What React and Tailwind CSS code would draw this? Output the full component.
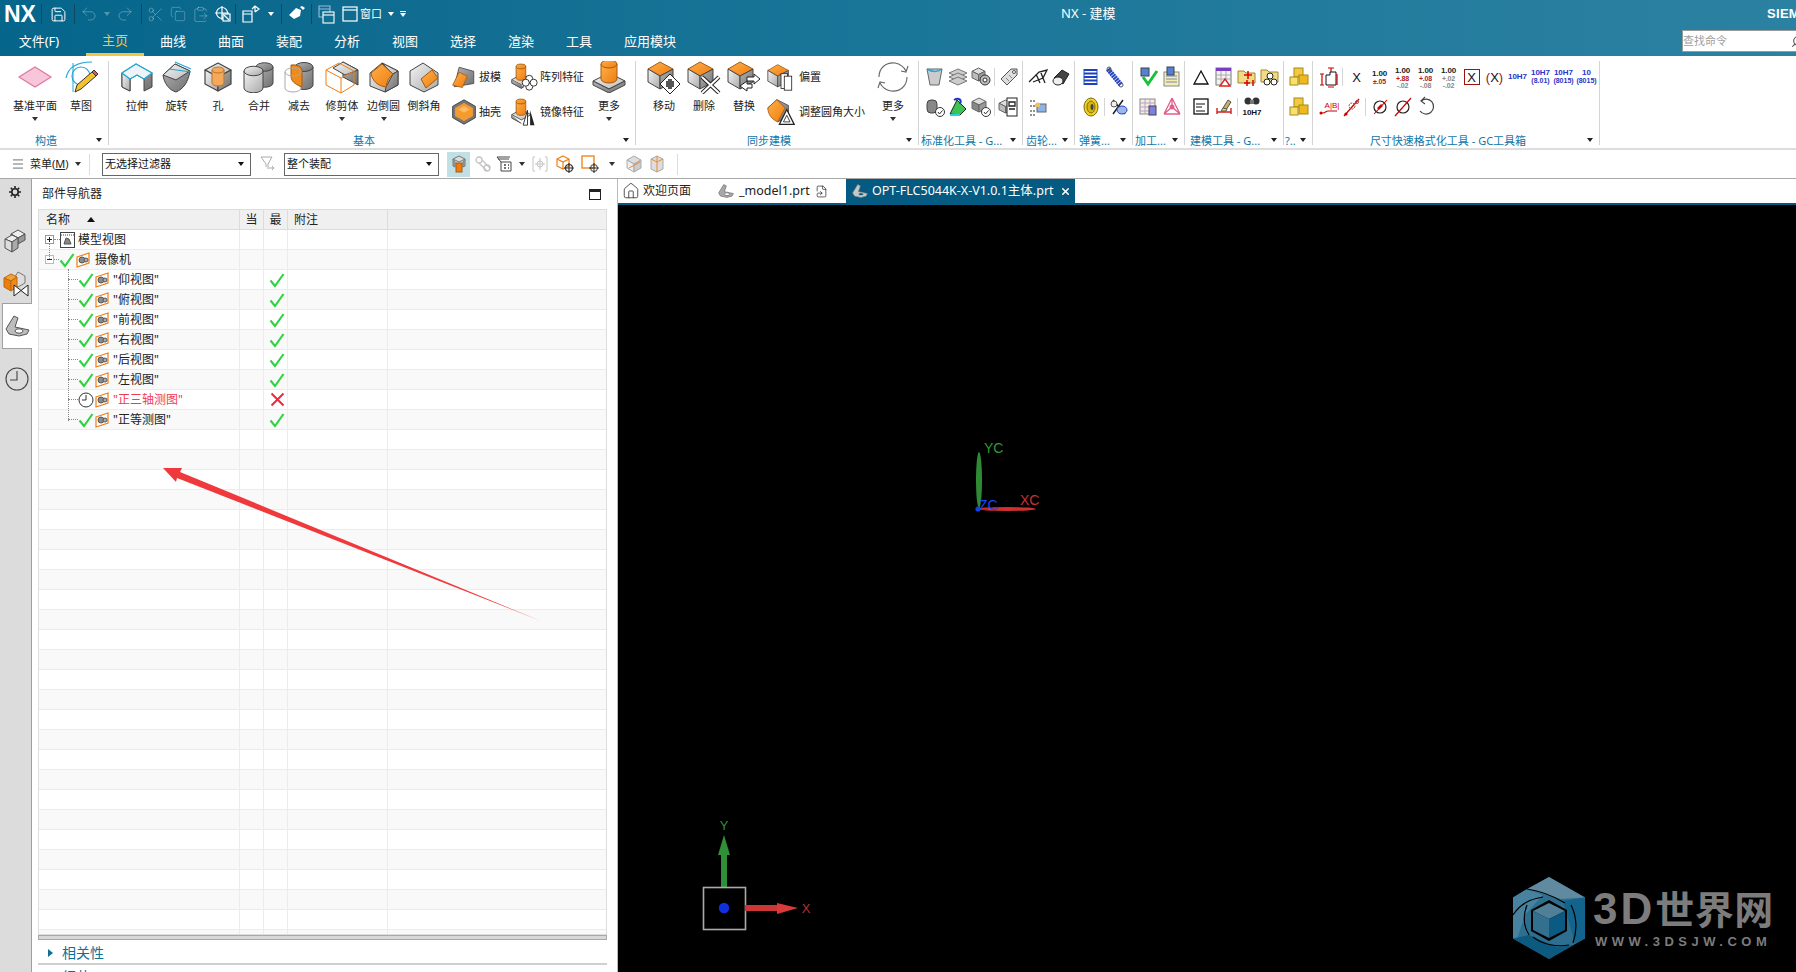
import React from 'react';
import { Save, Undo2, Redo2, Scissors, Copy, ClipboardPaste, Search, Home, FileSymlink, X as XIcon, Menu } from 'lucide-react';

const FONT = "[font-family:'Noto_Sans','Noto_Sans_CJK_SC',sans-serif]";

const Caret = ({ className = 'border-t-[#333]' }) => (
  <span className={`inline-block w-0 h-0 border-l-[3px] border-r-[3px] border-t-[4px] border-l-transparent border-r-transparent ${className}`}></span>
);

/* shared gradients */
const Defs = () => (
  <svg className="absolute w-0 h-0">
    <defs>
      <linearGradient id="gt" x1="0" y1="0" x2="1" y2="1"><stop offset="0" stopColor="#f2f2f2" /><stop offset="1" stopColor="#bdbdbd" /></linearGradient>
      <linearGradient id="gl" x1="0" y1="0" x2="1" y2="1"><stop offset="0" stopColor="#f4f4f4" /><stop offset="1" stopColor="#a9a9a9" /></linearGradient>
      <linearGradient id="gr" x1="0" y1="0" x2="1" y2="1"><stop offset="0" stopColor="#b5b5b5" /><stop offset="1" stopColor="#6f6f6f" /></linearGradient>
      <linearGradient id="ot" x1="0" y1="0" x2="1" y2="1"><stop offset="0" stopColor="#ffb04a" /><stop offset="1" stopColor="#ee7d10" /></linearGradient>
    </defs>
  </svg>
);

const Cube = ({ size = 32, top = 'url(#gt)', left = 'url(#gl)', right = 'url(#gr)', children }) => (
  <svg width={size} height={size} viewBox="0 0 32 32">
    <g stroke="#444" strokeWidth="1.2" strokeLinejoin="round">
      <polygon points="16,2 29,9 16,16 3,9" fill={top} />
      <polygon points="3,9 16,16 16,30 3,23" fill={left} />
      <polygon points="29,9 16,16 16,30 29,23" fill={right} />
    </g>
    {children}
  </svg>
);

const Cylinder = ({ x, y, w, h, fill, stroke = '#444' }) => (
  <g stroke={stroke} strokeWidth="1">
    <path d={`M${x} ${y}v${h}a${w / 2} ${w / 4} 0 0 0 ${w} 0v${-h}z`} fill={fill} />
    <ellipse cx={x + w / 2} cy={y} rx={w / 2} ry={w / 4} fill={fill} />
  </g>
);

const PlaneIcon = () => (
  <svg width="36" height="32" viewBox="0 0 36 32"><polygon points="2,16 18,6 34,16 18,26" fill="#f7c6da" stroke="#e0789c" strokeWidth="1.2" /></svg>
);
const SketchIcon = () => (
  <svg width="36" height="32" viewBox="0 0 36 32">
    <path d="M3 17C5 7 14 1 29 1" fill="none" stroke="#21a6d6" strokeWidth="1.2" />
    <path d="M10 2V31" stroke="#21a6d6" strokeWidth="1" />
    <circle cx="18" cy="15" r="9" fill="none" stroke="#21a6d6" strokeWidth="1.2" />
    <polygon points="12,31 14,24 29,11 33,15 18,28" fill="#f4c22c" stroke="#333" strokeWidth="1" />
    <polygon points="29,11 31,9 35,13 33,15" fill="#e05a5a" stroke="#333" strokeWidth="1" />
  </svg>
);
const ExtrudeIcon = () => (
  <svg width="32" height="32" viewBox="0 0 32 32">
    <path d="M1 12L15 3L31 12V26L23 30V18L16 14L9 18V30L1 26Z" fill="url(#gr)" stroke="#444" />
    <path d="M1 12L9 18V30L1 26Z" fill="url(#gl)" stroke="#444" />
    <path d="M1 12L9 18L16 14L23 18L31 12L15 3Z" fill="#eef4f6" stroke="#24a8d8" strokeWidth="1.3" />
  </svg>
);
const RevolveIcon = () => (
  <svg width="32" height="32" viewBox="0 0 32 32">
    <path d="M2 14L14 3L29 10C27 22 22 28 15 31C8 29 3 22 2 14Z" fill="url(#gr)" stroke="#444" />
    <path d="M2 14L14 3L29 10L15 19Z" fill="url(#gt)" stroke="#444" />
    <path d="M8 8L30 11M14 1L30 8" stroke="#21a6d6" strokeWidth="1.2" />
  </svg>
);
const HoleIcon = () => <Cube><Cylinder x={10} y={9} w={12} h={13} fill="#f5a75a" stroke="#b5772f" /></Cube>;
const UniteIcon = () => (
  <svg width="32" height="32" viewBox="0 0 32 32">
    <Cylinder x={13} y={6} w={17} h={16} fill="url(#gr)" />
    <Cylinder x={1} y={10} w={19} h={17} fill="url(#gl)" />
  </svg>
);
const SubtractIcon = () => (
  <svg width="32" height="32" viewBox="0 0 32 32">
    <Cylinder x={12} y={6} w={18} h={18} fill="url(#gr)" />
    <path d="M2 11V27A8 4 0 0 0 18 27" fill="#fff" stroke="#aaa" />
    <path d="M8 4A9 5 0 0 1 19 9V26C15 24 8 22 8 15Z" fill="#f08a1a" stroke="#a65a10" />
    <ellipse cx="10" cy="11" rx="8" ry="4" fill="none" stroke="#aaa" />
  </svg>
);
const TrimIcon = () => (
  <svg width="34" height="34" viewBox="0 0 34 34">
    <polygon points="18,2 33,10 33,25 18,17" fill="url(#gr)" stroke="#444" />
    <polygon points="18,2 33,10 20,15 8,8" fill="url(#gt)" stroke="#444" />
    <g fill="none" stroke="#ee7d10" strokeWidth="1"><polygon points="1,10 16,18 16,33 1,25" /><polyline points="1,10 14,3 29,11 16,18" /><polyline points="29,11 29,25 16,33" /></g>
  </svg>
);
const BlendIcon = () => (
  <svg width="32" height="32" viewBox="0 0 32 32">
    <path d="M2 12L14 2L30 10V24L17 31L2 25Z" fill="url(#gl)" stroke="#444" />
    <path d="M14 2L30 10L25 13Z" fill="url(#gt)" stroke="#444" />
    <path d="M25 13L30 10V24L17 31L18 26Z" fill="url(#gr)" stroke="#444" />
    <path d="M3 12L14 3L25 13C21 16 19 20 18 26C10 25 4 20 3 12Z" fill="url(#ot)" stroke="#a65a10" />
  </svg>
);
const ChamferIcon = () => (
  <svg width="32" height="32" viewBox="0 0 32 32">
    <path d="M2 10L15 2L30 12V24L16 31L2 24Z" fill="url(#gl)" stroke="#444" />
    <polygon points="13,18 24,9 30,17 18,27" fill="url(#ot)" stroke="#a65a10" />
  </svg>
);
const DraftIcon = () => (
  <svg width="26" height="26" viewBox="0 0 32 32">
    <polygon points="10,4 28,9 28,24 4,28" fill="url(#gr)" stroke="#444" />
    <polygon points="10,10 20,15 14,29 2,26" fill="url(#ot)" stroke="#a65a10" />
  </svg>
);
const ShellIcon = () => (
  <svg width="26" height="30" viewBox="0 0 32 32">
    <polygon points="16,1 30,9 30,23 16,31 2,23 2,9" fill="#777" stroke="#333" />
    <polygon points="16,5 27,11 27,21 16,27 5,21 5,11" fill="#f59a2c" />
    <polygon points="16,9 23,13 16,17 9,13" fill="#fdb964" />
  </svg>
);
const PatternIcon = () => (
  <svg width="28" height="28" viewBox="0 0 32 32">
    <polygon points="2,19 13,13 24,19 13,25" fill="url(#gt)" stroke="#444" />
    <path d="M2 19v4l11 6l3-2" fill="url(#gr)" stroke="#444" />
    <Cylinder x={7} y={4} w={11} h={13} fill="url(#ot)" stroke="#a65a10" />
    <g fill="#fff" stroke="#222"><circle cx="22" cy="18" r="4" /><circle cx="22" cy="27" r="4" /><circle cx="18" cy="22.5" r="4" /><circle cx="27" cy="22.5" r="4" /></g>
  </svg>
);
const MirrorIcon = () => (
  <svg width="28" height="30" viewBox="0 0 32 32">
    <polygon points="2,19 13,13 24,19 13,25" fill="url(#gt)" stroke="#444" />
    <path d="M2 19v4l11 6" fill="url(#gr)" stroke="#444" />
    <Cylinder x={7} y={4} w={11} h={13} fill="url(#ot)" stroke="#a65a10" />
    <polygon points="15,31 20,14 20,31" fill="#fff" stroke="#222" /><polygon points="23,31 23,14 28,31" fill="#222" />
  </svg>
);
const MoreBlockIcon = () => (
  <svg width="34" height="32" viewBox="0 0 34 32">
    <polygon points="1,20 17,12 33,20 17,28" fill="url(#gt)" stroke="#444" />
    <path d="M1 20v4l16 8l16-8v-4l-16 8z" fill="url(#gr)" stroke="#444" />
    <Cylinder x={9} y={3} w={16} h={15} fill="url(#ot)" stroke="#a65a10" />
  </svg>
);
const SyncCube = ({ children, size = 34 }) => (
  <svg width={size} height={size} viewBox="0 0 34 34">
    <polygon points="13,2 26,9 13,16 1,9" fill="url(#ot)" stroke="#a65a10" />
    <polygon points="1,9 13,16 13,29 1,22" fill="url(#gl)" stroke="#444" />
    <polygon points="26,9 13,16 13,29 26,22" fill="url(#gr)" stroke="#444" />
    {children}
  </svg>
);
const MoveIcon = () => (
  <SyncCube>
    <polygon points="23,14 33,24 23,34 13,24" fill="#fff" stroke="#222" />
    <path d="M19 21h2v-2h4v2h2v6h-2v2h-4v-2h-2z" fill="#555" />
  </SyncCube>
);
const DeleteIcon = () => <SyncCube><path d="M15 17L32 33M32 17L15 33" stroke="#222" strokeWidth="4" /><path d="M15 17L32 33M32 17L15 33" stroke="#fff" strokeWidth="2" /></SyncCube>;
const ReplaceIcon = () => (
  <SyncCube>
    <path d="M20 17h7v-3l6 5l-6 5v-3h-7zM25 24h-5v-3l-7 5l7 5v-3h5z" fill="#fff" stroke="#222" />
  </SyncCube>
);
const OffsetIcon = () => (
  <SyncCube size={28}><rect x="17" y="13" width="8" height="18" fill="#fff" stroke="#222" /><rect x="21" y="16" width="9" height="17" fill="#fff" stroke="#222" /></SyncCube>
);
const ResizeIcon = () => (
  <svg width="28" height="30" viewBox="0 0 34 34">
    <path d="M1 12L12 2L26 9V22L13 29Z" fill="url(#gr)" stroke="#444" />
    <path d="M1 12L12 2L22 12L13 29C6 26 1 20 1 12Z" fill="url(#ot)" stroke="#a65a10" />
    <polygon points="24,14 33,32 15,32" fill="#fff" stroke="#222" strokeWidth="1.5" /><polygon points="24,21 28,29 20,29" fill="#fff" stroke="#222" />
  </svg>
);
const RefreshIcon = () => (
  <svg width="32" height="34" viewBox="0 0 32 34" fill="none" stroke="#666" strokeWidth="1.1">
    <path d="M2 17C2 8 9 2 18 3C23 4 27 7 29 11" /><path d="M30 17C30 26 23 32 14 31C9 30 5 27 3 23" />
    <path d="M24 11L29 12L31 6M8 23L3 22L1 28" />
  </svg>
);

const S = ({ children, w = 22, h = 22 }) => <svg width={w} height={h} viewBox="0 0 22 22">{children}</svg>;
const Gray = ({ x = 3, y = 3, s = 14, f = '#bbb' }) => (
  <g stroke="#666" strokeWidth="1"><polygon points={`${x + s / 2},${y} ${x + s},${y + s / 4} ${x + s / 2},${y + s / 2} ${x},${y + s / 4}`} fill="#ddd" /><polygon points={`${x},${y + s / 4} ${x + s / 2},${y + s / 2} ${x + s / 2},${y + s} ${x},${y + s * 0.75}`} fill={f} /><polygon points={`${x + s},${y + s / 4} ${x + s / 2},${y + s / 2} ${x + s / 2},${y + s} ${x + s},${y + s * 0.75}`} fill="#999" /></g>
);
const Badge = ({ cx = 16, cy = 16 }) => <g><circle cx={cx} cy={cy} r="4.5" fill="#fff" stroke="#333" /><path d={`M${cx - 2} ${cy}l1.5 2l3-3.5`} fill="none" stroke="#333" /></g>;
const Sep = () => <span className="w-px h-[18px] bg-[#d5d5d5] mx-[2px] shrink-0"></span>;

const smallIcons = {
  stdA: <S><polygon points="3,3 18,3 15,19 6,19" fill="#ccc" stroke="#666" /><path d="M3 3q8 5 15 0" fill="none" stroke="#21a6d6" strokeWidth="1.5" /></S>,
  stdB: <S><g fill="#ccc" stroke="#777"><polygon points="11,3 20,7 11,11 2,7" /><polygon points="11,7 20,11 11,15 2,11" /><polygon points="11,11 20,15 11,19 2,15" /></g></S>,
  stdC: <S><Gray x={2} y={2} s={13} /><circle cx="15" cy="14" r="5" fill="#bbb" stroke="#333" /><circle cx="15" cy="14" r="2" fill="#fff" stroke="#333" /></S>,
  stdD: <S><path d="M3 13L13 3H19V9L9 19Z" fill="#ddd" stroke="#555" /><circle cx="16" cy="6" r="1.5" fill="#fff" stroke="#555" /><path d="M8 12l3 3M11 9l3 3" stroke="#888" /></S>,
  stdE: <S><rect x="3" y="4" width="10" height="13" rx="4" fill="#888" stroke="#444" /><Badge /></S>,
  stdF: <S><path d="M3 18L10 4l9 9-6 6z" fill="#3bc452" stroke="#222" /><path d="M7 4c5-3 8 0 6 4" fill="none" stroke="#2035c8" strokeWidth="2" /><path d="M3 19h10" stroke="#2ad3d3" strokeWidth="2" /></S>,
  stdG: <S><Gray x={2} y={2} s={14} f="#888" /><Badge /></S>,
  stdH: <S><Gray x={1} y={4} s={13} /><rect x="9" y="2" width="10" height="18" fill="#fff" stroke="#222" /><path d="M11 6h6v4h-6zM11 13h6" fill="none" stroke="#222" strokeWidth="1.3" /></S>,
  gearA: <S><path d="M2 16L12 6L20 4L16 12L6 16M9 8L13 17M14 7L18 17" fill="none" stroke="#222" strokeWidth="1.3" /></S>,
  gearB: <S><path d="M4 12L12 4L19 8L13 18Z" fill="#444" stroke="#222" /><ellipse cx="8" cy="15" rx="5" ry="4" fill="#eee" stroke="#222" /></S>,
  gearC: <S><path d="M3 5h5M3 10h5M3 15h5M3 19h5" stroke="#222" strokeDasharray="2 1" /><rect x="10" y="8" width="9" height="8" fill="#8cb4e6" stroke="#666" /><path d="M8 8c2-2 4-2 5 0v3H8z" fill="#f0c060" /></S>,
  springA: <S><g stroke="#1f3fc0" strokeWidth="2"><path d="M4 4h13M4 7.5h13M4 11h13M4 14.5h13M4 18h13" /></g><path d="M4 3v16M17 3v16" stroke="#15a" strokeWidth="1" /></S>,
  springB: <S><path d="M5 3l13 16" stroke="#2340c8" strokeWidth="5" strokeDasharray="2 0.6" /><circle cx="6" cy="3" r="2" fill="none" stroke="#555" /><circle cx="18" cy="19" r="2" fill="none" stroke="#555" /></S>,
  springC: <S><ellipse cx="11" cy="11" rx="7" ry="9" fill="#f2d21f" stroke="#776a10" /><ellipse cx="11" cy="11" rx="4" ry="6" fill="#d9b70e" stroke="#776a10" /><ellipse cx="12" cy="11" rx="1.5" ry="3" fill="#444" /></S>,
  springD: <S><path d="M5 4l12 14M15 4L5 18" stroke="#222" strokeWidth="1.5" /><ellipse cx="14" cy="14" rx="5" ry="4" fill="#9bb6e8" stroke="#2340c8" /><ellipse cx="6" cy="8" rx="3" ry="3" fill="#eee" stroke="#555" /></S>,
  machA: <S><rect x="3" y="2" width="8" height="8" fill="#5a7fd0" stroke="#345" /><path d="M5 11l5 7l9-13" fill="none" stroke="#18c23a" strokeWidth="3" /></S>,
  machB: <S><rect x="3" y="6" width="15" height="14" fill="#f6edb0" stroke="#888" /><path d="M5 10h11M5 13h11M5 16h11" stroke="#7a86b8" /><rect x="6" y="1" width="7" height="8" fill="#5a7fd0" stroke="#345" /></S>,
  machC: <S><rect x="2" y="3" width="15" height="15" fill="#f5eedd" stroke="#888" /><path d="M2 7h15M2 11h15M2 15h15M7 3v15M12 3v15" stroke="#b7a0d0" /><rect x="11" y="10" width="7" height="9" fill="#7f7fdf" stroke="#445" /></S>,
  machD: <S><path d="M11 2v9M11 11l-8 7M11 11l8 7M3 18h16M11 2L3 18M11 2l8 16" fill="none" stroke="#e0608a" strokeWidth="1.3" /><circle cx="11" cy="11" r="2.5" fill="#e0608a" /></S>,
  toolA: <S><polygon points="11,5 18,18 4,18" fill="none" stroke="#111" strokeWidth="1.3" /></S>,
  toolB: <S><rect x="3" y="2" width="15" height="17" fill="#f3f3f3" stroke="#777" /><rect x="3" y="2" width="15" height="3" fill="#7a3fc0" /><path d="M3 9h15M3 13h15M8 5v14M13 5v14" stroke="#aaa" /><polygon points="12,13 17,20 7,20" fill="#fff" stroke="#d22" strokeWidth="1.4" /></S>,
  toolC: <S><path d="M2 5h6l2 2h9v10H2z" fill="#f0dc86" stroke="#a0882a" /><path d="M12 5v8M8 9h8M8 17h6M11 14v6M17 14v6" stroke="#d00" strokeWidth="1.5" /></S>,
  toolD: <S><path d="M2 4h6l2 2h9v10H2z" fill="#f0dc86" stroke="#a0882a" /><circle cx="11" cy="10" r="3" fill="#fff" stroke="#222" /><circle cx="8" cy="16" r="3" fill="#fff" stroke="#222" /><circle cx="15" cy="16" r="3" fill="#fff" stroke="#222" /></S>,
  toolE: <S><rect x="4" y="3" width="14" height="15" fill="#fff" stroke="#111" strokeWidth="1.3" /><path d="M6 8h9M6 11h6M6 15h9" stroke="#111" strokeWidth="1.1" /></S>,
  toolF: <S><path d="M4 18V12M18 18V12M4 16h14" stroke="#c22" strokeWidth="1.4" /><path d="M10 12L15 4l3 2-5 8z" fill="#c8b060" stroke="#555" /><path d="M10 12l-2 3h5l1-2z" fill="#f6d860" stroke="#555" /></S>,
  toolG: <S><circle cx="7" cy="5" r="3.5" fill="#333" /><circle cx="15" cy="5" r="3.5" fill="#333" /><rect x="9" y="4" width="4" height="4" fill="#777" /><text x="11" y="19" fontSize="8" fontWeight="700" textAnchor="middle" fill="#111" fontFamily="Liberation Sans">10H7</text></S>,
  gold: <S><g stroke="#a88a10"><rect x="6" y="2" width="9" height="9" fill="#f5c842" /><rect x="2" y="11" width="8" height="8" fill="#f7e06c" /><rect x="11" y="9" width="9" height="9" fill="#f0b820" /></g></S>,
  dimA: <S><path d="M8 19V9h4V6h6v13z" fill="none" stroke="#111" strokeWidth="1" /><path d="M10 2h6M13 2v4M10 21h6M2 8h4M2 19h4M4 8v11M19 8v11" stroke="#c00" strokeWidth="1.2" /></S>,
  dimB: <S><path d="M2 17h3c2 0 3-2 5-2h9" fill="none" stroke="#c00" strokeWidth="1.2" /><circle cx="3" cy="17" r="1.5" fill="#c00" /><text x="14" y="12" fontSize="8" fill="#c00" textAnchor="middle" fontFamily="Liberation Sans">A|B|</text></S>,
  dimC: <S><path d="M3 20L18 3" stroke="#c00" strokeWidth="1.3" /><circle cx="5" cy="18" r="1.6" fill="#c00" /><circle cx="11" cy="10" r="3" fill="none" stroke="#a44" strokeDasharray="2 1" /><circle cx="16" cy="6" r="1.5" fill="none" stroke="#a44" /></S>,
  dimD: <S><circle cx="11" cy="11" r="6" fill="none" stroke="#222" strokeWidth="1.2" /><path d="M5 18L18 4" stroke="#c00" strokeWidth="1.1" /><path d="M13 9l-4 4" stroke="#c00" strokeWidth="2.5" /></S>,
  dimE: <S><circle cx="11" cy="11" r="6" fill="none" stroke="#222" strokeWidth="1.2" /><path d="M3 20L19 2" stroke="#c00" strokeWidth="1.2" /></S>,
  undo: <S><path d="M6 5A7.5 7.5 0 1 1 5 15" fill="none" stroke="#444" strokeWidth="1.2" /><path d="M10 1L6 5l4 3" fill="none" stroke="#444" strokeWidth="1.1" /></S>,
};

const Dim = ({ top = '1.00', a, b, c = 'text-[#b02020]' }) => (
  <span className="flex flex-col items-center font-['Liberation_Sans'] font-bold text-[7px] leading-[7px] tracking-[-0.2px]">
    <span className="text-[8px] leading-[9px] text-[#222]">{top}</span>
    <span className={c}>{a}</span>
    {b && <span className="text-[#888]">{b}</span>}
  </span>
);
const Blue = ({ t, a }) => (
  <span className="flex flex-col items-center font-['Liberation_Sans'] font-bold text-[#2a33c8] text-[8px] leading-[8px]">
    <span>{t}</span>
    {a && <span className="text-[7px]">{a}</span>}
  </span>
);

const Big = ({ w, icon, label, drop }) => (
  <div className={`flex flex-col items-center shrink-0 ${w}`}>
    <div className="h-[32px] flex items-center justify-center">{icon}</div>
    <span className="mt-[5px] text-[11px] leading-[16px] text-[#222] whitespace-nowrap">{label}</span>
    {drop && <span className="mt-[3px] leading-[4px] flex"><Caret /></span>}
  </div>
);

const Small = ({ w, icon, label, gap }) => (
  <div className={`flex items-center h-[32px] ${w}`}>
    <span className="w-[30px] flex justify-center shrink-0">{icon}</span>
    <span className={`text-[11px] text-[#222] whitespace-nowrap ${gap}`}>{label}</span>
  </div>
);

const Group = ({ w, label, labelClass = 'justify-center pr-[16px]', children }) => (
  <div className={`relative flex flex-col shrink-0 h-[84px] border-r border-[#d4d4d4] ${w}`}>
    <div className="flex h-[74px] shrink-0 overflow-hidden">{children}</div>
    <div className={`relative flex h-[12px] shrink-0 items-center whitespace-nowrap text-[11px] text-[#0f76a8] ${labelClass}`}>
      {label}
      <span className="absolute right-[6px] top-[3px] flex"><Caret className="border-t-[#222]" /></span>
    </div>
  </div>
);

const Cell = ({ children, w = 'w-[23px]' }) => <span className={`h-[22px] flex items-center justify-center shrink-0 ${w}`}>{children}</span>;
const Rows = ({ pad, a, b }) => (
  <div className={`flex flex-col gap-[8px] pt-[5px] ${pad}`}>
    <div className="flex items-center">{a}</div>
    <div className="flex items-center">{b}</div>
  </div>
);
const ic = (k) => <Cell>{smallIcons[k]}</Cell>;

const Ribbon = () => (
  <div className="flex h-[94px] pt-[5px] bg-white border-b-2 border-[#dddddd] shrink-0">
    <Group w="w-[109px]" label="构造">
      <div className="flex pl-[12px]">
        <Big w="w-[46px]" icon={<PlaneIcon />} label="基准平面" drop />
        <Big w="w-[46px]" icon={<SketchIcon />} label="草图" />
      </div>
    </Group>
    <Group w="w-[527px]" label="基本">
      <div className="flex pl-[8px]">
        <Big w="w-[40px]" icon={<ExtrudeIcon />} label="拉伸" />
        <Big w="w-[39px]" icon={<RevolveIcon />} label="旋转" />
        <Big w="w-[44px]" icon={<HoleIcon />} label="孔" />
        <Big w="w-[38px]" icon={<UniteIcon />} label="合并" />
        <Big w="w-[42px]" icon={<SubtractIcon />} label="减去" />
        <Big w="w-[44px]" icon={<TrimIcon />} label="修剪体" drop />
        <Big w="w-[39px]" icon={<BlendIcon />} label="边倒圆" drop />
        <Big w="w-[42px]" icon={<ChamferIcon />} label="倒斜角" />
        <div className="flex flex-col gap-[3px] w-[64px] pl-[4px]">
          <Small w="w-[60px]" icon={<DraftIcon />} label="拔模" />
          <Small w="w-[60px]" icon={<ShellIcon />} label="抽壳" />
        </div>
        <div className="flex flex-col gap-[3px] w-[77px]">
          <Small w="w-[77px]" icon={<PatternIcon />} label="阵列特征" gap="ml-[1px]" />
          <Small w="w-[77px]" icon={<MirrorIcon />} label="镜像特征" gap="ml-[1px]" />
        </div>
        <Big w="w-[46px]" icon={<MoreBlockIcon />} label="更多" drop />
      </div>
    </Group>
    <Group w="w-[283px]" label="同步建模">
      <div className="flex pl-[8px]">
        <Big w="w-[40px]" icon={<MoveIcon />} label="移动" />
        <Big w="w-[40px]" icon={<DeleteIcon />} label="删除" />
        <Big w="w-[40px]" icon={<ReplaceIcon />} label="替换" />
        <div className="flex flex-col gap-[3px] w-[106px] pl-[2px]">
          <Small w="w-[100px]" icon={<OffsetIcon />} label="偏置" gap="ml-[3px]" />
          <Small w="w-[100px]" icon={<ResizeIcon />} label="调整圆角大小" gap="ml-[3px]" />
        </div>
        <Big w="w-[46px]" icon={<RefreshIcon />} label="更多" drop />
      </div>
    </Group>
    <Group w="w-[104px]" label="标准化工具 - G..." labelClass="pl-[2px]">
      <Rows pad="pl-[4px]"
        a={<>{ic('stdA')}{ic('stdB')}{ic('stdC')}<Sep />{ic('stdD')}</>}
        b={<>{ic('stdE')}{ic('stdF')}{ic('stdG')}<Sep />{ic('stdH')}</>} />
    </Group>
    <Group w="w-[52px]" label="齿轮..." labelClass="pl-[3px]">
      <Rows pad="pl-[3px]" a={<>{ic('gearA')}{ic('gearB')}</>} b={<>{ic('gearC')}</>} />
    </Group>
    <Group w="w-[58px]" label="弹簧..." labelClass="pl-[4px]">
      <Rows pad="pl-[4px]" a={<>{ic('springA')}{ic('springB')}</>} b={<>{ic('springC')}<Sep />{ic('springD')}</>} />
    </Group>
    <Group w="w-[52px]" label="加工..." labelClass="pl-[2px]">
      <Rows pad="pl-[4px]" a={<>{ic('machA')}{ic('machB')}</>} b={<>{ic('machC')}{ic('machD')}</>} />
    </Group>
    <Group w="w-[99px]" label="建模工具 - G..." labelClass="pl-[5px]">
      <Rows pad="pl-[4px]" a={<>{ic('toolA')}{ic('toolB')}{ic('toolC')}{ic('toolD')}</>} b={<>{ic('toolE')}{ic('toolF')}<Sep />{ic('toolG')}</>} />
    </Group>
    <Group w="w-[29px]" label="?.." labelClass="pl-[1px]">
      <Rows pad="pl-[3px]" a={ic('gold')} b={ic('gold')} />
    </Group>
    <Group w="w-[287px]" label="尺寸快速格式化工具 - GC工具箱">
      <Rows pad="pl-[4px]"
        a={<>
          {ic('dimA')}<Sep />
          <Cell><span className="text-[13px] leading-none text-[#111] font-['Liberation_Sans']">X</span></Cell>
          <Cell><Dim a="±.05" /></Cell>
          <Cell><Dim a="+.88" b="-.02" /></Cell>
          <Cell><Dim a="+.08" b="-.08" /></Cell>
          <Cell><Dim a="+.02" c="text-[#888]" b="-.02" /></Cell>
          <Cell><span className="w-[16px] h-[16px] border border-[#a01010] flex items-center justify-center text-[13px] leading-none text-[#111] font-['Liberation_Sans']">X</span></Cell>
          <Cell><span className="text-[13px] leading-none text-[#111] font-['Liberation_Sans']"><span className="text-[#a01010]">(</span>X<span className="text-[#a01010]">)</span></span></Cell>
          <Cell><Blue t="10H7" /></Cell>
          <Cell><Blue t="10H7" a="(8.01)" /></Cell>
          <Cell><Blue t="10H7" a="(8015)" /></Cell>
          <Cell><Blue t="10" a="(8015)" /></Cell>
        </>}
        b={<>{ic('dimB')}{ic('dimC')}<Sep />{ic('dimD')}{ic('dimE')}{ic('undo')}</>} />
    </Group>
  </div>
);

const TitleBar = () => (
  <div className="shrink-0 h-[56px] text-white bg-gradient-to-r from-[#05658a] via-[#1a7699] to-[#2b81a1]">
    <div className="flex items-center h-[28px]">
      <span className="w-[41px] pl-[4px] text-[23px] font-bold leading-none font-['Liberation_Sans']">NX</span>
      <span className="w-px h-[20px] bg-[#0a4a64]"></span>
      <span className="w-[32px] flex justify-center"><Save size={17} strokeWidth={1.4} /></span>
      <span className="w-px h-[20px] bg-[#0a4a64]"></span>
      <span className="flex items-center text-white/30 gap-[6px] pl-[5px] w-[66px]">
        <Undo2 size={18} strokeWidth={1.3} />
        <span className="flex"><Caret className="border-t-white/30" /></span>
        <Redo2 size={18} strokeWidth={1.3} />
      </span>
      <span className="w-px h-[20px] bg-[#0a4a64]"></span>
      <span className="flex items-center gap-[6px] pl-[5px] text-white/30 w-[72px]">
        <Scissors size={17} strokeWidth={1.3} /><Copy size={16} strokeWidth={1.3} /><ClipboardPaste size={17} strokeWidth={1.3} />
      </span>
      <svg width="18" height="18" viewBox="0 0 18 18" fill="none" stroke="#fff" strokeWidth="1.2"><circle cx="8" cy="8" r="5.5" /><path d="M8 1v14M1 8h14" /><rect x="9" y="9" width="7" height="7" fill="#0f6f92" /><path d="M10 10l5 5" /></svg>
      <span className="w-px h-[20px] bg-[#0a4a64] ml-[3px]"></span>
      <span className="flex items-center gap-[8px] pl-[6px] w-[45px]">
        <svg width="18" height="18" viewBox="0 0 18 18" fill="none" stroke="#fff" strokeWidth="1.2"><path d="M1 6h9v11H1zM1 9h9M10 4l3-3 4 3-4 3M13 1v6" /></svg>
        <span className="flex"><Caret className="border-t-white" /></span>
      </span>
      <span className="w-px h-[20px] bg-[#0a4a64]"></span>
      <span className="w-[29px] flex justify-center">
        <svg width="18" height="16" viewBox="0 0 18 16" fill="#fff"><path d="M1 9l7-7 5 2-1 6-6 3zM12 1l3 3 2-2-3-2z" /></svg>
      </span>
      <span className="w-px h-[20px] bg-[#0a4a64]"></span>
      <svg className="ml-[6px]" width="17" height="19" viewBox="0 0 17 19" fill="none" stroke="#9bd" strokeWidth="1.1"><path d="M1 1h11v11H1zM1 4h11" /><rect x="5" y="7" width="11" height="11" fill="#0f6f92" stroke="#fff" /><path d="M5 10h11" stroke="#fff" /></svg>
      <svg className="ml-[7px]" width="16" height="16" viewBox="0 0 16 16" fill="none" stroke="#fff" strokeWidth="1.2"><rect x="1" y="1" width="14" height="14" /><path d="M1 4h14" /></svg>
      <span className="ml-[2px] w-[23px] text-[11px]">窗口</span>
      <span className="ml-[5px] flex"><Caret className="border-t-white" /></span>
      <span className="ml-[6px] flex flex-col items-center gap-[1px]"><span className="w-[6px] h-px bg-white"></span><Caret className="border-t-white" /></span>
      <span className="ml-[655px] text-[13px] whitespace-nowrap">NX - 建模</span>
      <span className="flex-1"></span>
      <span className="w-[29px] overflow-hidden text-[13px] font-bold font-['Liberation_Sans'] tracking-[0.3px] whitespace-nowrap">SIEMENS</span>
    </div>
    <div className="flex items-start h-[28px] text-[13px]">
      <span className="w-[86px] h-[28px] flex items-center justify-center pr-[12px] pl-[4px]">文件(F)</span>
      <span className="w-[58px] h-[28px] flex items-center justify-center text-[#f6c445] border-b-[3px] border-[#f6c445]">主页</span>
      {['曲线', '曲面', '装配', '分析', '视图', '选择', '渲染', '工具'].map((m) => (
        <span key={m} className="w-[58px] h-[28px] flex items-center justify-center">{m}</span>
      ))}
      <span className="ml-[11px] w-[62px] h-[28px] flex items-center justify-center whitespace-nowrap">应用模块</span>
      <span className="flex-1"></span>
      <div className="mt-[2px] w-[124px] mr-[-10px] h-[22px] bg-white border border-[#999] flex items-center justify-between pr-[1px] shrink-0">
        <span className="text-[11px] text-[#a0a0a0]">查找命令</span>
        <Search size={13} className="text-[#555] -scale-x-100" />
      </div>
    </div>
  </div>
);

const Select = ({ w, text }) => (
  <div className={`${w} h-[23px] border border-[#666] bg-white flex items-center justify-between px-[2px] pr-[6px] text-[11px] text-[#111]`}>
    <span>{text}</span>
    <Caret className="border-t-[#111]" />
  </div>
);

const Toolbar = () => (
  <div className="shrink-0 h-[29px] bg-white border-b border-[#a8a8a8] flex items-center text-[#222]">
    <Menu size={14} strokeWidth={1.2} className="ml-[11px] text-[#333]" />
    <span className="ml-[5px] w-[38px] text-[11px] whitespace-nowrap">菜单(<span className="underline">M</span>)</span>
    <span className="ml-[7px] flex"><Caret /></span>
    <span className="ml-[8px] w-px h-[21px] bg-[#ddd]"></span>
    <span className="w-[12px]"></span>
    <Select w="w-[149px]" text="无选择过滤器" />
    <span className="w-[33px] flex justify-center">
      <svg width="16" height="18" viewBox="0 0 16 18" fill="none" stroke="#aaa"><path d="M1 2h11L8 9v5M1 2l5 7v3" /><path d="M9 13h5l-2-2M14 13l-2 2" /></svg>
    </span>
    <Select w="w-[155px]" text="整个装配" />
    <span className="ml-[8px] w-[23px] h-[25px] bg-[#c0e0e6] flex items-center justify-center">
      <svg width="14" height="18" viewBox="0 0 14 18"><polygon points="7,1 13,4 7,7 1,4" fill="#ddd" stroke="#777" /><path d="M1 4v7l2 1V7zM13 4v7l-2 1V7z" fill="#aaa" stroke="#777" /><rect x="4" y="8" width="6" height="9" fill="#ee7d10" stroke="#a65a10" /></svg>
    </span>
    <span className="w-[26px] flex justify-center">
      <svg width="18" height="18" viewBox="0 0 18 18" fill="none" stroke="#c4c4c4" strokeWidth="1.3"><circle cx="5" cy="5" r="3" /><circle cx="13" cy="13" r="3" /><path d="M5 8l8 8M8 5l8 8" /></svg>
    </span>
    <svg width="18" height="18" viewBox="0 0 18 18" fill="none" stroke="#444"><path d="M1 2h13M1 2l4 5v9h10V7H5M2 4h11" /><path d="M8 10h2M12 10h1M8 13h2M12 13h1" strokeWidth="1.5" /></svg>
    <span className="ml-[5px] flex"><Caret /></span>
    <span className="w-[30px] flex justify-center">
      <svg width="16" height="18" viewBox="0 0 16 18" fill="none" stroke="#c4c4c4"><path d="M3 2H1v14h2M13 2h2v14h-2" /><circle cx="8" cy="9" r="3" /><path d="M8 3v12M3 9h10" /></svg>
    </span>
    <span className="w-[20px] flex justify-center">
      <svg width="18" height="18" viewBox="0 0 18 18" fill="none" stroke="#ee7d10" strokeWidth="1.2"><path d="M7 1l6 3v7l-6 3-6-3V4zM1 4l6 3 6-3M7 7v7" /><circle cx="13" cy="13" r="3.5" stroke="#333" /><path d="M13 8v10M8 13h10" stroke="#333" /></svg>
    </span>
    <span className="w-[30px] flex justify-center">
      <svg width="18" height="18" viewBox="0 0 18 18" fill="none"><rect x="1" y="1" width="12" height="12" stroke="#ee7d10" strokeWidth="1.3" /><circle cx="13" cy="13" r="3.5" stroke="#333" /><path d="M13 8v10M8 13h10" stroke="#333" /></svg>
    </span>
    <span className="ml-[4px] flex"><Caret /></span>
    <span className="w-[25px] ml-[6px] flex justify-center">
      <svg width="18" height="18" viewBox="0 0 18 18"><polygon points="9,1 16,5 9,9 2,5" fill="#ddd" stroke="#aaa" /><polygon points="2,5 9,9 9,17 2,13" fill="#eee" stroke="#aaa" /><polygon points="16,5 9,9 9,17 16,13" fill="#ccc" stroke="#aaa" /><path d="M4 13l11-6" stroke="#ee8a30" /></svg>
    </span>
    <span className="w-[22px] flex justify-center">
      <svg width="16" height="18" viewBox="0 0 16 18"><polygon points="8,1 14,4 14,14 8,17 2,14 2,4" fill="#ddd" stroke="#aaa" /><path d="M8 1v16M2 4l6 3 6-3" stroke="#ee8a30" fill="none" /></svg>
    </span>
    <span className="ml-[9px] w-px h-[21px] bg-[#ddd]"></span>
  </div>
);

const Check = ({ s = 16 }) => (
  <svg width={s} height={s} viewBox="0 0 16 16"><path d="M1.5 8.5L6 14L14.5 2" fill="none" stroke="#2fd23f" strokeWidth="2.1" /></svg>
);
const Camera = () => (
  <svg width="14" height="16" viewBox="0 0 14 16">
    <polygon points="1,5 13,1 13,11 1,15" fill="#fff" stroke="#ee7d10" strokeWidth="1.2" />
    <circle cx="6" cy="8" r="3" fill="#8a8a8a" stroke="#555" /><circle cx="10" cy="8" r="2" fill="#aaa" stroke="#555" />
  </svg>
);
const TreeBox = ({ sign }) => (
  <span className={`relative w-[9px] h-[9px] border flex items-center justify-center shrink-0 bg-white ${sign === '+' ? 'border-[#999]' : 'border-[#bbb]'}`}>
    <span className="w-[5px] h-px bg-[#222]"></span>
    {sign === '+' && <span className="absolute w-px h-[5px] bg-[#222]"></span>}
  </span>
);
const Dots = ({ w }) => <span className={`${w} h-0 border-t border-dotted border-[#888] shrink-0`}></span>;

const views = ['"仰视图"', '"俯视图"', '"前视图"', '"右视图"', '"后视图"', '"左视图"', '"正三轴测图"', '"正等测图"'];
const COLS = 'grid grid-cols-[201px_24px_24px_100px_1fr]';

const TreeRow = ({ index, first, mark }) => (
  <div className={`${COLS} h-[20px] border-b border-[#ececec] ${index % 2 ? 'bg-[#f9f9f9]' : 'bg-white'}`}>
    <div className="border-r border-[#ececec] flex items-center overflow-hidden">{first}</div>
    <div className="border-r border-[#ececec]"></div>
    <div className="border-r border-[#ececec] flex items-center justify-center pl-[3px]">{mark}</div>
    <div className="border-r border-[#ececec]"></div>
    <div></div>
  </div>
);

const Tree = () => {
  const rows = [];
  rows.push(
    <TreeRow key="m" index={0} first={
      <div className="flex items-center pl-[6px]">
        <TreeBox sign="+" /><Dots w="w-[6px]" />
        <svg width="15" height="16" viewBox="0 0 15 16"><rect x="0.5" y="0.5" width="14" height="15" fill="#fff" stroke="#444" /><path d="M1 3h13" stroke="#444" strokeDasharray="1 1" /><path d="M4 12l2-6 3 1 2 5z" fill="#888" stroke="#555" /></svg>
        <span className="ml-[3px] text-[12px] text-[#222]">模型视图</span>
      </div>
    } />
  );
  rows.push(
    <TreeRow key="c" index={1} first={
      <div className="flex items-center pl-[6px]">
        <TreeBox sign="-" /><Dots w="w-[5px]" /><Check /><span className="w-px"></span><Camera />
        <span className="ml-[5px] text-[12px] text-[#222]">摄像机</span>
      </div>
    } />
  );
  views.forEach((v, i) => {
    const red = i === 6;
    rows.push(
      <TreeRow key={v} index={i + 2} mark={red
        ? <svg width="15" height="15" viewBox="0 0 15 15"><path d="M1.5 1.5L13.5 13.5M13.5 1.5L1.5 13.5" stroke="#f0283c" strokeWidth="2" /></svg>
        : <Check />}
        first={
          <div className="flex items-center pl-[29px]">
            <Dots w="w-[10px]" />
            {red
              ? <svg width="16" height="16" viewBox="0 0 16 16" fill="none" stroke="#333"><circle cx="8" cy="8" r="7" /><path d="M8 3v5H4" /></svg>
              : <Check />}
            <span className="w-px"></span><Camera />
            <span className={`ml-[4px] text-[12px] whitespace-nowrap ${red ? 'text-[#f03c50]' : 'text-[#222]'}`}>{v}</span>
          </div>
        } />
    );
  });
  for (let i = 10; i < 36; i++) rows.push(<TreeRow key={i} index={i} />);
  return rows;
};

const NavPanel = () => (
  <div className="w-[586px] shrink-0 bg-white flex flex-col pl-[6px] pr-[10px] border-r border-[#bbb] overflow-hidden">
    <div className="h-[30px] shrink-0 flex items-center justify-between pl-[4px] pr-[6px]">
      <span className="text-[12px] text-[#222]">部件导航器</span>
      <span className="w-[12px] h-[11px] border border-[#222] border-t-[3px]"></span>
    </div>
    <div className="relative h-[726px] shrink-0 border border-[#dddddd] overflow-hidden">
      <div className={`${COLS} h-[20px] bg-[#f0f0f0] border-b border-[#dcdcdc] text-[12px] text-[#222]`}>
        <div className="border-r border-[#dcdcdc] flex items-center pl-[7px]">
          名称
          <span className="ml-[17px] w-0 h-0 border-l-[4px] border-r-[4px] border-b-[5px] border-l-transparent border-r-transparent border-b-[#111]"></span>
        </div>
        <div className="border-r border-[#dcdcdc] flex items-center justify-center">当</div>
        <div className="border-r border-[#dcdcdc] flex items-center justify-center">最</div>
        <div className="border-r border-[#dcdcdc] flex items-center pl-[6px]">附注</div>
        <div></div>
      </div>
      <Tree />
      {/* tree connectors */}
      <span className="absolute left-[10px] top-[34px] h-[15px] border-l border-dotted border-[#888]"></span>
      <span className="absolute left-[29px] top-[59px] h-[152px] border-l border-dotted border-[#888]"></span>
    </div>
    <div className="h-[5px] shrink-0 bg-[#d8d8d8] border border-[#a8a8a8]"></div>
    <div className="h-[23px] shrink-0 flex items-center pl-[10px] pt-[2px] text-[14px] text-[#0f6f95]">
      <span className="w-0 h-0 border-t-[4px] border-b-[4px] border-l-[5px] border-t-transparent border-b-transparent border-l-[#0f6f95]"></span>
      <span className="ml-[9px]">相关性</span>
    </div>
    <div className="h-[2px] shrink-0 bg-[#d0d0d0]"></div>
    <div className="h-[23px] shrink-0 flex items-center pl-[10px] text-[14px] text-[#0f6f95]">
      <span className="w-0 h-0 border-t-[4px] border-b-[4px] border-l-[5px] border-t-transparent border-b-transparent border-l-[#0f6f95]"></span>
      <span className="ml-[9px]">细节</span>
    </div>
  </div>
);

const Rail = () => (
  <div className="w-[32px] shrink-0 bg-[#dcdcdc] border-r border-[#a0a0a0] flex flex-col items-center relative">
    <svg className="mt-[6px] mr-[2px]" width="14" height="14" viewBox="0 0 14 14" fill="none" stroke="#222" strokeWidth="1.6"><circle cx="7" cy="7" r="3.2" /><path d="M7 1v2M7 11v2M1 7h2M11 7h2M2.8 2.8l1.4 1.4M9.8 9.8l1.4 1.4M2.8 11.2l1.4-1.4M9.8 4.2l1.4-1.4" /></svg>
    <svg className="mt-[30px] mr-[2px]" width="22" height="24" viewBox="0 0 22 24"><g stroke="#555"><polygon points="14,1 21,5 14,9 7,5" fill="#eee" /><polygon points="7,5 14,9 14,15 7,11" fill="#ddd" /><polygon points="21,5 14,9 14,15 21,11" fill="#999" /><polygon points="1,10 8,6 14,9 8,13" fill="#eee" /><polygon points="1,10 8,13 8,23 1,19" fill="#ddd" /><polygon points="14,9 8,13 8,23 14,19" fill="#aaa" /></g></svg>
    <svg className="mt-[18px]" width="26" height="26" viewBox="0 0 26 26"><polygon points="15,1 22,5 22,12 15,16 8,12" fill="#ddd" stroke="#777" /><polygon points="1,7 8,3 14,6 8,10" fill="#f7a035" stroke="#b76a10" /><polygon points="1,7 8,10 8,20 1,16" fill="#ee7d10" stroke="#b76a10" /><polygon points="14,6 8,10 8,20 14,16" fill="#f08a20" stroke="#b76a10" /><path d="M11 14L25 25V14L11 25Z" fill="#fff" stroke="#222" /></svg>
    <div className="mt-[6px] ml-[2px] w-[30px] h-[46px] bg-white border-y border-l border-[#a0a0a0] mr-[-1px] flex items-center justify-center relative z-10">
      <svg width="25" height="22" viewBox="0 0 25 22"><path d="M1 14L9 1l4 2-3 9 14 3-2 4-8 2-10-2z" fill="#bdbdbd" stroke="#555" /><ellipse cx="14" cy="16" rx="4" ry="2.2" fill="#fff" stroke="#555" /></svg>
    </div>
    <svg className="mt-[18px] ml-[3px]" width="24" height="24" viewBox="0 0 24 24" fill="none" stroke="#444" strokeWidth="1.1"><circle cx="12" cy="12" r="11" /><path d="M12 4v9H5" /></svg>
  </div>
);

const Tabs = () => (
  <div className="h-[26px] shrink-0 bg-white border-b-2 border-[#045a80] flex text-[12px] text-[#222]">
    <div className="w-[228px] h-[24px] flex items-center">
      <Home size={18} strokeWidth={1.1} className="ml-[4px] text-[#333]" />
      <span className="ml-[3px]">欢迎页面</span>
      <svg className="ml-[27px]" width="16" height="16" viewBox="0 0 25 22"><path d="M1 14L9 1l4 2-3 9 14 3-2 4-8 2-10-2z" fill="#a8a8a8" stroke="#666" /><ellipse cx="14" cy="16" rx="4" ry="2.2" fill="#fff" stroke="#666" /></svg>
      <span className="ml-[5px] text-[12.5px]">_model1.prt</span>
      <FileSymlink size={13} strokeWidth={1.3} className="ml-[5px] text-[#222]" />
    </div>
    <div className="w-[229px] h-[24px] bg-[#045a80] text-white flex items-center">
      <svg className="ml-[6px]" width="16" height="16" viewBox="0 0 25 22"><path d="M1 14L9 1l4 2-3 9 14 3-2 4-8 2-10-2z" fill="#c8c8c8" stroke="#888" /><ellipse cx="14" cy="16" rx="4" ry="2.2" fill="#045a80" stroke="#ccc" /></svg>
      <span className="ml-[4px] text-[12.5px] whitespace-nowrap">OPT-FLC5044K-X-V1.0.1主体.prt</span>
      <XIcon size={11} strokeWidth={3.4} className="ml-auto mr-[4px]" />
    </div>
  </div>
);

const Viewport = () => (
  <div className="relative flex-1 bg-black overflow-hidden">
    {/* datum csys */}
    <svg className="absolute left-[332px] top-[215px]" width="120" height="110" viewBox="0 0 120 110">
      <ellipse cx="29" cy="60" rx="3" ry="28" fill="#2f8a34" />
      <ellipse cx="57" cy="89" rx="29" ry="2" fill="#d23030" />
      <circle cx="28" cy="89" r="2.6" fill="#1540e0" />
      <g fontFamily="Liberation Sans" fontSize="14">
        <text x="34" y="33" fill="#2f9a36">YC</text>
        <text x="29" y="90" fill="#1848f0">ZC</text>
        <text x="70" y="85" fill="#c83030">XC</text>
      </g>
    </svg>
    {/* view triad */}
    <svg className="absolute left-[62px] top-[575px]" width="160" height="160" viewBox="0 0 160 160">
      <rect x="41" y="75" width="6" height="32" fill="#2f9038" />
      <polygon points="44,55 38,75 50,75" fill="#2f9038" />
      <rect x="23.5" y="107.5" width="42" height="42" fill="#000" stroke="#aaa" strokeWidth="1.6" />
      <circle cx="44" cy="128" r="5.2" fill="#1030e0" />
      <rect x="65" y="125" width="32" height="6" fill="#cc3636" />
      <polygon points="97,123 118,128 97,134" fill="#d93a3a" />
      <g fontFamily="Liberation Sans" fontSize="13">
        <text x="44" y="50" textAnchor="middle" fill="#2f9038">Y</text>
        <text x="126" y="133" textAnchor="middle" fill="#b83030">X</text>
      </g>
    </svg>
    {/* watermark */}
    <div className="absolute left-[895px] top-[672px] flex items-center gap-[8px]">
      <svg width="72" height="82" viewBox="0 0 72 82">
        <polygon points="36,0 72,20.5 72,61.5 36,82 0,61.5 0,20.5" fill="#2e6f90" />
        <polygon points="36,0 72,20.5 48,22 14,12" fill="#5f8a9f" />
        <polygon points="0,20.5 14,12 30,18 12,38 4,62 0,61.5" fill="#47829e" />
        <polygon points="72,20.5 72,61.5 62,66 50,24" fill="#13648c" />
        <polygon points="36,82 0,61.5 16,58 44,70 60,68" fill="#0c5a80" />
        <g fill="none" stroke="#000" strokeWidth="1.2">
          <path d="M14 12C28 14 42 20 52 26M0 38C8 26 18 22 30 20M16 58C10 48 10 38 14 28M60 66C64 54 64 40 58 28M20 60C30 68 44 70 56 68" />
        </g>
        <polygon points="36,23 54,33 54,54 36,64 18,54 18,33" fill="#000" />
        <polygon points="36,26 52,34 36,42 20,34" fill="#4f8098" />
        <polygon points="20,34 36,42 36,61 20,53" fill="#33708f" />
        <polygon points="52,34 36,42 36,61 52,53" fill="#0a5a82" />
      </svg>
      <div className="flex flex-col text-[#7c7c7c]">
        <span className="flex items-baseline h-[42px] leading-[42px] font-bold whitespace-nowrap font-['Liberation_Sans','Noto_Sans_CJK_SC',sans-serif]">
          <span className="text-[44px] tracking-[3px]">3D</span>
          <span className="text-[39px] tracking-[0.5px]">世界网</span>
        </span>
        <span className="mt-[5px] ml-[2px] text-[13px] leading-[13px] tracking-[4.5px] whitespace-nowrap font-['Liberation_Sans'] font-bold">WWW.3DSJW.COM</span>
      </div>
    </div>
  </div>
);

export default function App() {
  return (
    <div className={`relative w-[1796px] h-[972px] overflow-hidden flex flex-col bg-white ${FONT}`}>
      <Defs />
      <TitleBar />
      <Ribbon />
      <Toolbar />
      <div className="flex flex-1 min-h-0">
        <Rail />
        <NavPanel />
        <div className="flex-1 flex flex-col min-w-0">
          <Tabs />
          <Viewport />
        </div>
      </div>
      {/* red annotation arrow */}
      <svg className="absolute left-0 top-0 pointer-events-none" width="1796" height="972" viewBox="0 0 1796 972">
        <polygon points="163,468 182,468 180,472 541,621 177,478 176,482" fill="#f0393c" />
      </svg>
    </div>
  );
}
